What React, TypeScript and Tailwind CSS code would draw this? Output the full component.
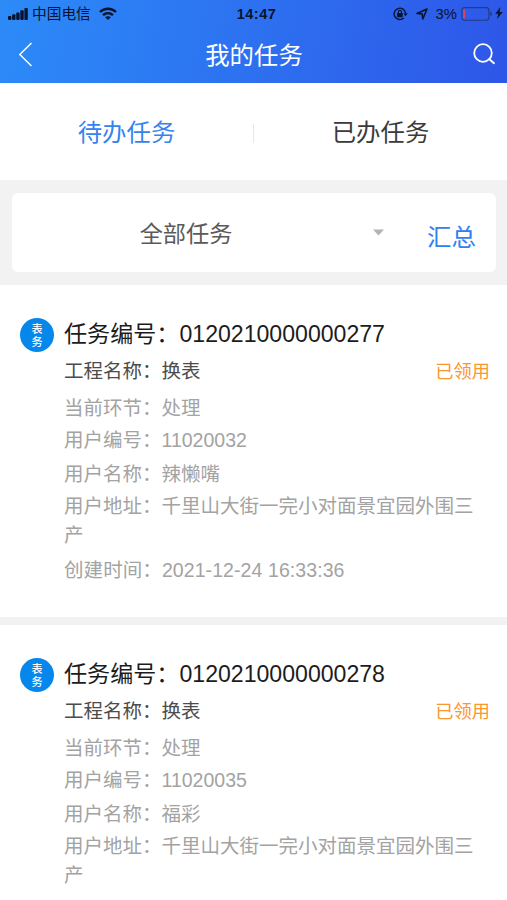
const tasks = [
    { id: "0120210000000277", project: "换表", step: "处理", userNo: "11020032", userName: "辣懒嘴", address: "千里山大街一完小对面景宜园外围三产", created: "2021-12-24 16:33:36", status: "已领用" },
    { id: "0120210000000278", project: "换表", step: "处理", userNo: "11020035", userName: "福彩", address: "千里山大街一完小对面景宜园外围三产", status: "已领用" },
];

const StatusBar = () => {
    return (
        <div className="h-[28px] grid grid-cols-[1fr_auto_1fr] items-center px-2 text-[#08142f]">
            <div className="flex items-center">
                <svg width="20" height="12" viewBox="0 0 20 12" fill="currentColor">
                    <rect x="0" y="8" width="3.4" height="4" rx="1" />
                    <rect x="4.1" y="6.2" width="3.4" height="5.8" rx="1" />
                    <rect x="8.2" y="4.4" width="3.4" height="7.6" rx="1" />
                    <rect x="12.3" y="2.2" width="3.4" height="9.8" rx="1" />
                    <rect x="16.4" y="0" width="3.4" height="12" rx="1" />
                </svg>
                <span className="ml-1 text-[14.7px] leading-[20px]">中国电信</span>
                <svg className="ml-2 -mt-0.5" width="18" height="13" viewBox="0 0 18 13" fill="none" stroke="currentColor" strokeWidth="2.4">
                    <path d="M1 5C5.5 0.6 12.5 0.6 17 5" />
                    <path d="M4 8.2C7 5.4 11 5.4 14 8.2" />
                    <path d="M9 13L6.2 10.2C7.8 8.8 10.2 8.8 11.8 10.2Z" fill="currentColor" stroke="none" />
                </svg>
            </div>
            <div className="pl-[6px] text-[14.5px] leading-[20px] font-bold tracking-[0.5px]">14:47</div>
            <div className="flex items-center justify-end -mr-1.5">
                <svg width="15" height="14" viewBox="0 0 15 14" fill="none" stroke="currentColor" strokeWidth="1.4">
                    <path d="M10.8 11A5.7 5.7 0 1 1 12.5 6" />
                    <path d="M10.3 6.2H14.7L12.6 9.2Z" fill="currentColor" stroke="none" />
                    <rect x="4.1" y="6" width="5.6" height="4.2" rx="0.5" fill="currentColor" stroke="none" />
                    <path d="M5.3 6.5V5A1.6 1.6 0 0 1 8.5 5V6.5" strokeWidth="1.1" />
                </svg>
                <svg className="ml-2 -mt-px" width="12" height="12" viewBox="0 0 12 12" fill="none" stroke="currentColor" strokeWidth="1.6" strokeLinejoin="round">
                    <path d="M11 1L1 5.4L6.2 6L6.8 11Z" />
                </svg>
                <span className="ml-[8px] text-[14.8px] leading-[20px]">3%</span>
                <svg className="ml-1" width="32" height="14" viewBox="0 0 32 14" fill="none">
                    <rect x="0.9" y="0.6" width="27" height="12.6" rx="2.6" stroke="#253b80" strokeWidth="1.1" />
                    <rect x="2.2" y="2.2" width="2" height="9.4" rx="0.8" fill="#e0405e" />
                    <path d="M29.2 4.8Q31 5.4 31 6.9T29.2 9Z" fill="#253b80" />
                </svg>
                <svg className="ml-[2px] mr-[2px] -mt-0.5" width="8" height="12" viewBox="0 0 8 12" fill="currentColor">
                    <path d="M5.4 0L0.3 6.7H3.3L2 12L7.7 4.9H4.5Z" />
                </svg>
            </div>
        </div>
    );
};

const TaskCard = ({ task }: { task: any }) => {
    return (
        <div className="bg-white flex pl-5 pr-[17px] pt-[29px] h-[332px] mb-[8.4px]">
            <div className="mt-[4px] pt-[2px] w-[34px] h-[34px] shrink-0 rounded-full bg-[#0687ec] text-white text-[11px] leading-[13px] font-medium flex flex-col items-center justify-center">
                <span>表</span>
                <span>务</span>
            </div>
            <div className="ml-[10px] flex-1 text-[19.5px] leading-[32px] text-[#a3a3a3]">
                <div className="text-[23.1px] leading-[40px] text-[#1c1c1c]">任务编号：{task.id}</div>
                <div className="flex justify-between leading-[34px] text-[#4c4c4c]">
                    <span>工程名称：{task.project}</span>
                    <span className="pt-px text-[18.3px] text-[#fb972f]">{task.status}</span>
                </div>
                <div className="mt-[3px]">当前环节：{task.step}</div>
                <div>用户编号：{task.userNo}</div>
                <div className="mt-[2px]">用户名称：{task.userName}</div>
                <div className="mt-[2px] leading-[29px]">用户地址：{task.address}</div>
                {
                    task.created ? <div className="mt-[4px] tracking-[0.08px]">创建时间：{task.created}</div> : null
                }
            </div>
        </div>
    );
};

const App = () => {
    return (
        <div className="w-full h-[900px] overflow-hidden bg-[#f2f2f2] font-['Liberation_Sans','Noto_Sans_CJK_SC',sans-serif]">
            <header className="h-[83px] bg-linear-[100deg,#2c8bf8,#2e56e8]">
                <StatusBar />
                <div className="h-[54px] grid grid-cols-[1fr_auto_1fr] items-center pl-[18px] pr-[11px] text-white">
                    <svg className="-mt-[3px]" width="15" height="26" viewBox="0 0 15 26" fill="none" stroke="currentColor" strokeWidth="1.4">
                        <path d="M13.5 2L1.8 13.4L13.5 25" />
                    </svg>
                    <h1 className="-ml-[6px] mt-px text-[24.4px] leading-[36px]">我的任务</h1>
                    <svg className="justify-self-end -mt-[2px]" width="23" height="22" viewBox="0 0 23 22" fill="none" stroke="currentColor" strokeWidth="1.8" strokeLinecap="round">
                        <circle cx="10" cy="10" r="8.8" />
                        <path d="M16.4 16.2L21 20.2" />
                    </svg>
                </div>
            </header>
            <nav className="h-[97px] pt-[4px] bg-white flex items-center text-[24.4px] text-[#3a3a3a]">
                <div className="flex-1 text-center text-[#3583f0]">待办任务</div>
                <div className="w-px h-[19px] mb-[1px] bg-[#e8e8e8]"></div>
                <div className="flex-1 text-center">已办任务</div>
            </nav>
            <div className="h-[105px] pl-3 pr-[11px] pt-[13px]">
                <div className="h-[79px] bg-white rounded-md flex items-center">
                    <div className="w-[348px] pt-[4px] text-center text-[23.2px] text-[#5a5a5a]">全部任务</div>
                    <svg className="ml-[13px]" width="11" height="7" viewBox="0 0 11 7" fill="#b4b4b4">
                        <path d="M0 0.5H11L5.5 6.5Z" />
                    </svg>
                    <div className="ml-[43px] pt-[11px] text-[24.4px] text-[#2f80f2]">汇总</div>
                </div>
            </div>
            {
                tasks.map((task) => <TaskCard key={task.id} task={task} />)
            }
        </div>
    );
};

export default App;
